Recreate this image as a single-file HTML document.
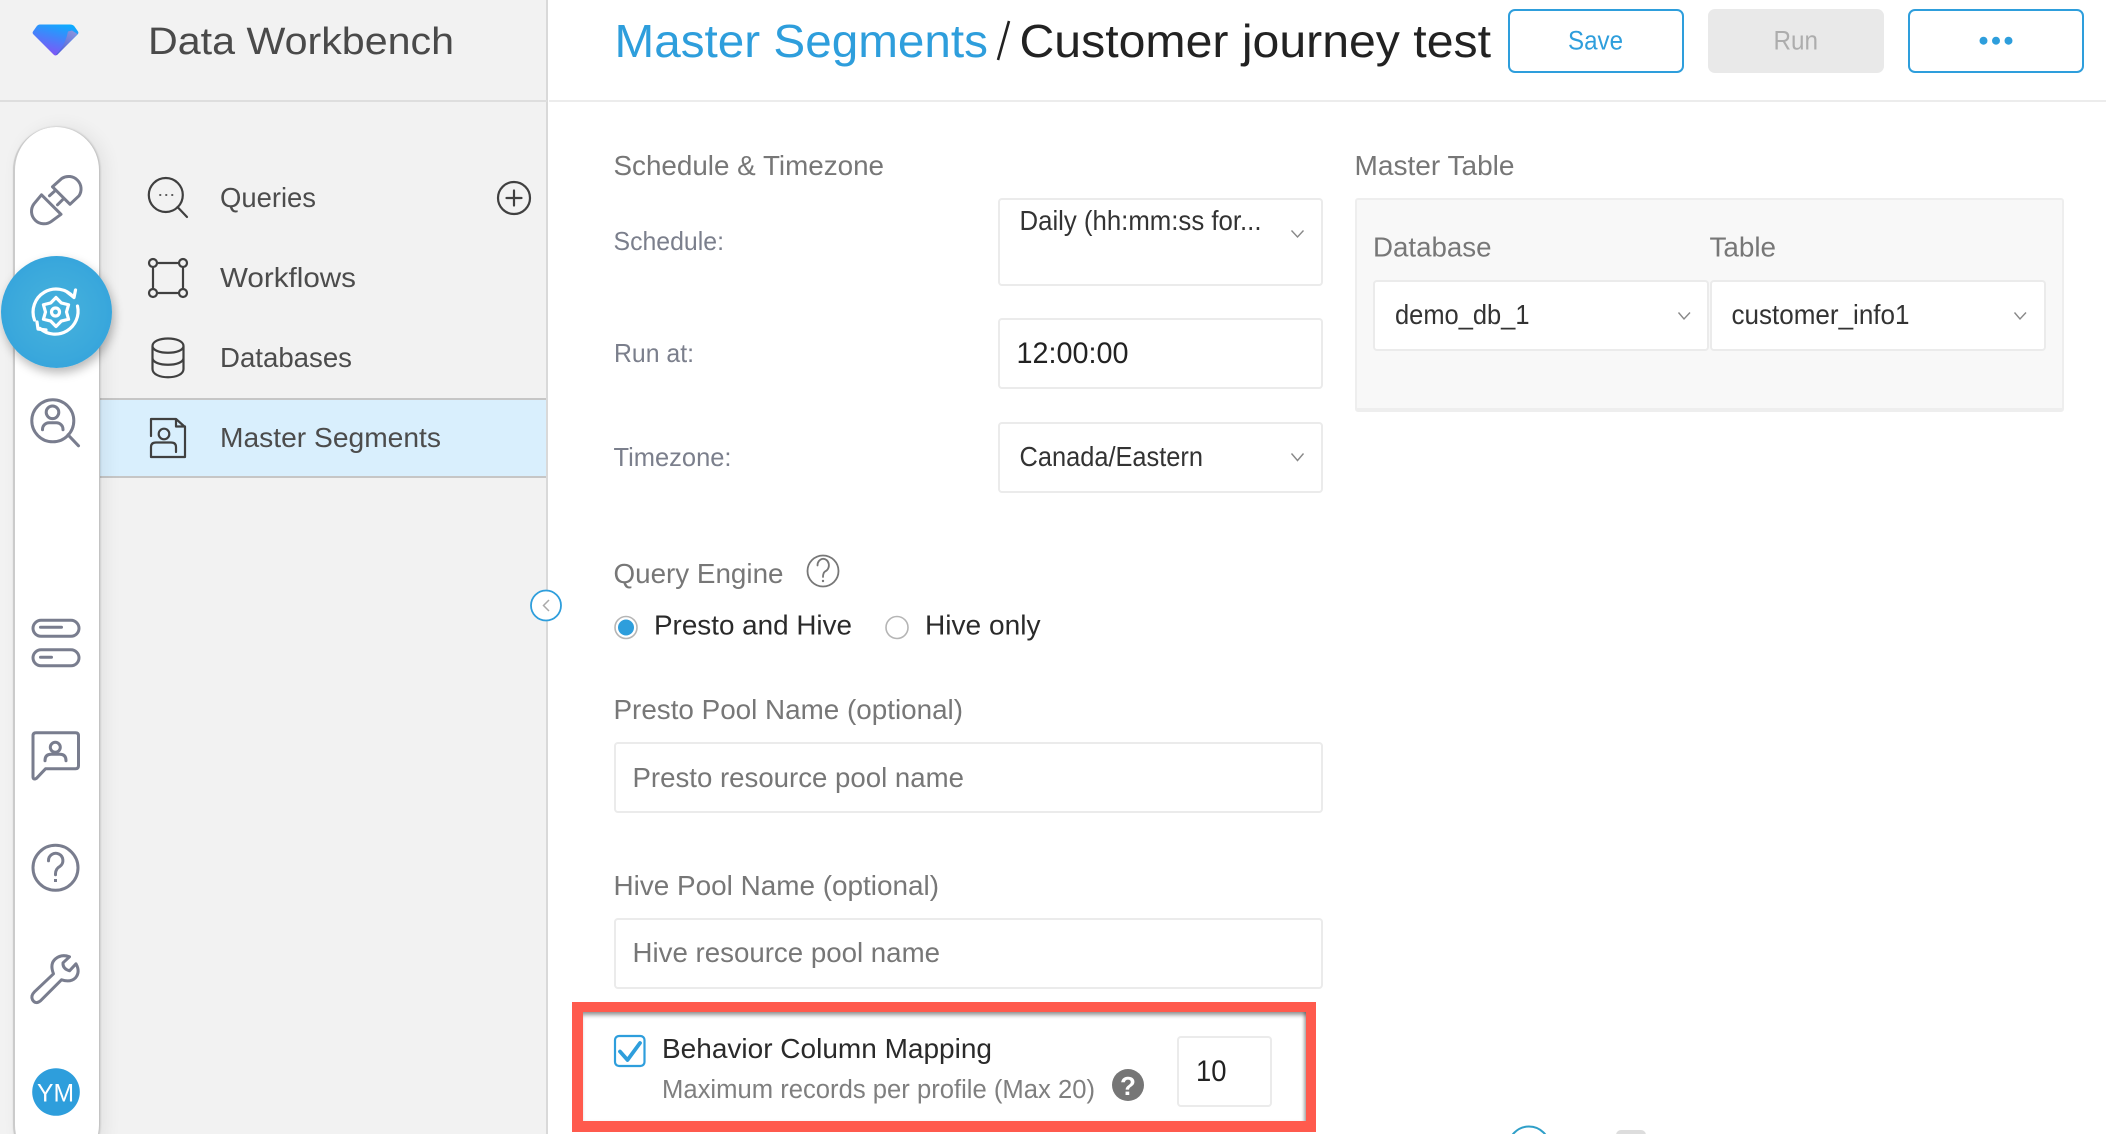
<!DOCTYPE html>
<html lang="en"><head><meta charset="utf-8"><title>Data Workbench</title>
<style>
html,body{margin:0;padding:0;background:#fff;width:2106px;height:1134px;overflow:hidden}
#p{position:relative;width:2106px;height:1134px;overflow:hidden;background:#fff}
.a{position:absolute;box-sizing:border-box}
svg{position:absolute;left:0;top:0;display:block}
text{font-family:"Liberation Sans",sans-serif}
.f{background:#fff;border:2px solid #ebebeb;border-radius:4px}
</style></head><body>
<div id="p">
<div class="a" style="left:0;top:0;width:548px;height:1134px;background:#f2f2f2;border-right:2px solid #d9d9d9"></div>
<div class="a" style="left:0;top:100px;width:547px;height:2px;background:#dedede"></div>
<div class="a" style="left:549px;top:100px;width:1557px;height:2px;background:#ececec"></div>
<div class="a" style="left:100px;top:398px;width:446px;height:80px;background:#d9effd;border-top:2px solid #c6c6c6;border-bottom:2px solid #c6c6c6"></div>
<div class="a" style="left:13px;top:127px;width:86px;height:1041px;background:#fff;border-radius:43px;border-left:2px solid #cbcbcb;box-shadow:1px 0 2px rgba(0,0,0,.22),6px 0 18px rgba(0,0,0,.07)"></div>
<div class="a" style="left:1px;top:256px;width:111px;height:112px;border-radius:50%;background:radial-gradient(circle,#47b2dc 0%,#3aa8dc 60%,#2e9edc 100%);box-shadow:2px 5px 10px rgba(0,0,0,.28)"></div>

<div class="a f" style="left:998px;top:198px;width:325px;height:88px"></div>
<div class="a f" style="left:998px;top:318px;width:325px;height:71px"></div>
<div class="a f" style="left:998px;top:422px;width:325px;height:71px"></div>
<div class="a" style="left:1355px;top:198px;width:709px;height:214px;background:#f8f8f8;border:2px solid #eee;border-bottom-width:4px;border-radius:3px"></div>
<div class="a f" style="left:1373px;top:280px;width:336px;height:71px"></div>
<div class="a f" style="left:1710px;top:280px;width:336px;height:71px"></div>
<div class="a f" style="left:614px;top:742px;width:709px;height:71px"></div>
<div class="a f" style="left:614px;top:918px;width:709px;height:71px"></div>
<div class="a" style="left:1508px;top:9px;width:176px;height:64px;border:2px solid #2e9edc;border-radius:7px"></div>
<div class="a" style="left:1708px;top:9px;width:176px;height:64px;background:#e9e9e9;border-radius:7px"></div>
<div class="a" style="left:1908px;top:9px;width:176px;height:64px;border:2px solid #2e9edc;border-radius:7px"></div>
<div class="a" style="left:572px;top:1002px;width:744px;height:130px;border:solid #ff5a4d;border-width:10px 10px 11px 11px;background:#fff;box-shadow:inset 0 5px 4px -2px rgba(0,0,0,.42),inset -4px 0 3px -2px rgba(0,0,0,.32)"></div>
<div class="a f" style="left:1177px;top:1036px;width:95px;height:71px"></div>
<div class="a" style="left:1616px;top:1130px;width:30px;height:12px;background:#ddd;border-radius:5px"></div>

<svg width="2106" height="1134" viewBox="0 0 2106 1134" fill="none" xmlns="http://www.w3.org/2000/svg">
<defs>
<linearGradient id="g" x1="0.75" y1="0" x2="0.35" y2="1"><stop offset="0" stop-color="#0cacff"/><stop offset="1" stop-color="#8552f5"/></linearGradient>
<linearGradient id="h" x1="0.8" y1="0" x2="0.2" y2="1"><stop offset="0" stop-color="#8a93de"/><stop offset="1" stop-color="#4c63d8"/></linearGradient>
</defs>
<!-- logo -->
<g transform="translate(-1 -0.500)">
<path d="M41 25H71Q74 25 75.500 27L79 32Q80 33.500 78.500 35L58.500 55Q56.500 57 54.500 55L34.500 35Q33 33.500 34 32L37.500 27Q39 25 41 25Z" fill="url(#g)"/>
<path d="M69 32L73 31L78.500 34.500L58 55.500L57 55Q63 49 66 42Q68 37 69 32Z" fill="url(#h)"/>
</g>

<g font-size="38" fill="#4a4a4a"><text x="148" y="54" textLength="306" lengthAdjust="spacingAndGlyphs">Data Workbench</text></g>
<g font-size="46"><text x="614.500" y="57" textLength="373.500" lengthAdjust="spacingAndGlyphs" fill="#2e9edc">Master Segments</text>
<text x="1019.500" y="57" textLength="471.500" lengthAdjust="spacingAndGlyphs" fill="#222">Customer journey test</text></g>
<path d="M1009 21L998 60" stroke="#222" stroke-width="2.600"/>

<!-- rail icons -->
<g transform="translate(-0.500 -1.200)" stroke="#797d8e" stroke-width="3" stroke-linecap="round" stroke-linejoin="round">
<path d="M53 188L62.500 179.500A12.500 12.500 0 0 1 79.500 197L70.500 205.500Z"/>
<path d="M42 196L61.500 215.500L52 222.500A12.500 12.500 0 0 1 34.500 205Z"/>
<path d="M50 197L55 192.500M58 206L63.500 200.500"/>
<circle cx="53.300" cy="422" r="21"/><circle cx="53" cy="413.500" r="6.300"/>
<path d="M43 431V430.500A6.500 6.500 0 0 1 49.500 424H57A6.500 6.500 0 0 1 63.500 430.500V431M68.500 436L79 447"/>
<rect x="33.500" y="621.500" width="46" height="16" rx="8"/><path d="M41 628.500H62"/>
<rect x="33.500" y="651" width="46" height="16" rx="8"/><path d="M41 658.500H52"/>
<path d="M36.500 734H76Q79 734 79 737V767Q79 770 76 770H46L37 779.500Q33.500 781.500 33.500 778V737Q33.500 734 36.500 734Z"/>
<circle cx="55.800" cy="748.500" r="5"/><path d="M45.500 762Q45.500 755.500 51.500 755.500H60.500Q66.500 755.500 66.500 762"/>
<circle cx="56" cy="869" r="22.500"/>
<path d="M49 862A7.200 7.200 0 1 1 60.500 867.500Q56 870 56 875V876"/>
<path d="M70 958L63.500 964Q63 970 70 972L76.500 965Q81 973 76 979Q71 984 62 981L41 1002Q36 1006 33 1001Q31 997 35 993L54 975Q50 965 56 960Q62 955 70 958Z"/>
</g>
<rect x="54" y="879" width="3" height="3" fill="#797d8e"/>
<circle cx="56" cy="1092" r="23.800" fill="#2e9edc"/>
<text x="37" y="1101.500" font-size="25" fill="#fff" textLength="37" lengthAdjust="spacingAndGlyphs">YM</text>

<!-- gear -->
<g stroke="#fff" stroke-width="3.200" stroke-linecap="round" stroke-linejoin="round">
<path d="M34.500 320A23 23 0 0 1 73.500 297"/><path d="M67 292L74 297.500L75.500 290"/>
<path d="M77.500 306A23 23 0 0 1 40 328.500"/><path d="M37 322L38 329L46 330"/>
<path d="M56 297.500L61.250 302.900L68.560 304.750L66.500 312L68.560 319.250L61.250 321.100L56 326.500L50.750 321.100L43.440 319.250L45.500 312L43.440 304.750L50.750 302.900Z"/>
<circle cx="55.500" cy="312" r="4"/>
</g>

<!-- nav icons -->
<g stroke="#404040" stroke-width="2.200" stroke-linecap="round" stroke-linejoin="round">
<circle cx="165.800" cy="195" r="17"/><path d="M177.500 207L187 217"/>
<path d="M160 195h.5M166 195h.5M172 195h.5" stroke-width="1.800"/>
<circle cx="153" cy="263" r="4"/><circle cx="183" cy="263" r="4"/><circle cx="153" cy="293" r="4"/><circle cx="183" cy="293" r="4"/>
<path d="M158.500 263H177.500M158.500 293H177.500M153 268.500V287.500M183 268.500V287.500"/>
<path d="M152.500 346C152.500 336 183.500 336 183.500 346C183.500 355 152.500 355 152.500 346ZM152.500 346V369C152.500 380 183.500 380 183.500 369V346M152.500 358C152.500 367 183.500 367 183.500 358"/>
<path d="M151 436V419H176L185 427V457H151V447Q151 442.500 156 442.500H171Q176 442.500 176 447V452M176 419V426.500H185"/>
<circle cx="164" cy="434" r="5.300"/>
<circle cx="514" cy="198" r="16"/><path d="M506.500 198H521.500M514 190.500V205.500"/>
</g>

<g font-size="27.500" fill="#4c4c4c">
<text x="220" y="207" textLength="96" lengthAdjust="spacingAndGlyphs">Queries</text>
<text x="220" y="287" textLength="136" lengthAdjust="spacingAndGlyphs">Workflows</text>
<text x="220" y="367" textLength="132" lengthAdjust="spacingAndGlyphs">Databases</text>
<text x="220" y="447" textLength="221" lengthAdjust="spacingAndGlyphs">Master Segments</text>
</g>

<!-- collapse -->
<circle cx="546" cy="605.500" r="15" fill="#fff" stroke="#2e9edc" stroke-width="1.800"/>
<path d="M549 600L543.500 605.500L549 611" stroke="#aaa" stroke-width="1.500"/>

<!-- header buttons -->
<g font-size="27">
<text x="1568" y="49.500" textLength="55" lengthAdjust="spacingAndGlyphs" fill="#2e9edc">Save</text>
<text x="1773.500" y="49.500" textLength="44.500" lengthAdjust="spacingAndGlyphs" fill="#adadad">Run</text>
</g>
<g fill="#2e9edc"><circle cx="1983.500" cy="40.700" r="4"/><circle cx="1996" cy="40.700" r="4"/><circle cx="2008.500" cy="40.700" r="4"/></g>

<!-- form labels -->
<g font-size="28" fill="#777">
<text x="613.500" y="175" textLength="270.500" lengthAdjust="spacingAndGlyphs">Schedule &amp; Timezone</text>
<text x="1354.500" y="175" textLength="160" lengthAdjust="spacingAndGlyphs">Master Table</text>
<text x="1373" y="256.500" textLength="118.500" lengthAdjust="spacingAndGlyphs">Database</text>
<text x="1709.500" y="256.500" textLength="66.500" lengthAdjust="spacingAndGlyphs">Table</text>
<text x="613.500" y="583" textLength="170" lengthAdjust="spacingAndGlyphs">Query Engine</text>
<text x="613.500" y="719" textLength="349.500" lengthAdjust="spacingAndGlyphs">Presto Pool Name (optional)</text>
<text x="613.500" y="895" textLength="325.500" lengthAdjust="spacingAndGlyphs">Hive Pool Name (optional)</text>
<text x="632.500" y="787" textLength="331.500" lengthAdjust="spacingAndGlyphs">Presto resource pool name</text>
<text x="632.500" y="962" textLength="307.500" lengthAdjust="spacingAndGlyphs">Hive resource pool name</text>
</g>
<g font-size="26" fill="#7b7f8c">
<text x="613.500" y="250" textLength="110.500" lengthAdjust="spacingAndGlyphs">Schedule:</text>
<text x="614" y="362" textLength="80" lengthAdjust="spacingAndGlyphs">Run at:</text>
<text x="613.500" y="466" textLength="118" lengthAdjust="spacingAndGlyphs">Timezone:</text>
</g>
<g font-size="27.500" fill="#333">
<text x="1019.500" y="230" textLength="242" lengthAdjust="spacingAndGlyphs">Daily (hh:mm:ss for...</text>
<text x="1019.500" y="466" textLength="183.500" lengthAdjust="spacingAndGlyphs">Canada/Eastern</text>
<text x="1395" y="324" textLength="134.500" lengthAdjust="spacingAndGlyphs">demo_db_1</text>
<text x="1731.500" y="324" textLength="178" lengthAdjust="spacingAndGlyphs">customer_info1</text>
</g>
<text x="1016.500" y="363" font-size="30" fill="#222" textLength="112" lengthAdjust="spacingAndGlyphs">12:00:00</text>
<g stroke="#888" stroke-width="1.400">
<path d="M1291.500 230.500L1297.500 237L1303.500 230.500"/>
<path d="M1291.500 453.500L1297.500 460.500L1303.500 453.500"/>
<path d="M1678.500 312.500L1684 319L1690 312.500"/>
<path d="M2014.500 312.500L2020 319L2026 312.500"/>
</g>

<!-- query engine -->
<circle cx="823" cy="571" r="15.500" stroke="#777" stroke-width="1.800"/>
<path d="M817.500 565.500A5.700 6.500 0 1 1 825 571.500Q823 573 823 577" stroke="#777" stroke-width="1.800" stroke-linecap="round"/>
<circle cx="823" cy="581" r="1.200" fill="#777"/>
<circle cx="626" cy="627.500" r="11" fill="#fff" stroke="#b5b5b5" stroke-width="1.600"/>
<circle cx="626" cy="627.500" r="8" fill="#2e9edc"/>
<circle cx="897" cy="627.500" r="11" fill="#fff" stroke="#b5b5b5" stroke-width="1.600"/>
<g font-size="27.500" fill="#2a2a2a">
<text x="654" y="634.500" textLength="198" lengthAdjust="spacingAndGlyphs">Presto and Hive</text>
<text x="925" y="634.500" textLength="115.500" lengthAdjust="spacingAndGlyphs">Hive only</text>
<text x="662" y="1058" textLength="330" lengthAdjust="spacingAndGlyphs">Behavior Column Mapping</text>
</g>

<!-- behaviour row -->
<rect x="615" y="1036" width="29.500" height="30" rx="4" fill="#fff" stroke="#2e9edc" stroke-width="2.200"/>
<path d="M620 1051.500L627.500 1060L640 1043" stroke="#2e9edc" stroke-width="3.800" stroke-linecap="round" stroke-linejoin="round"/>
<text x="662" y="1098" font-size="25.500" fill="#7f7f7f" textLength="433" lengthAdjust="spacingAndGlyphs">Maximum records per profile (Max 20)</text>
<circle cx="1128" cy="1085" r="16" fill="#767676"/>
<text x="1128" y="1095" font-size="26" font-weight="bold" fill="#fff" text-anchor="middle">?</text>
<text x="1196" y="1081" font-size="30" fill="#222" textLength="30.500" lengthAdjust="spacingAndGlyphs">10</text>

<!-- bottom partial arc -->
<circle cx="1529" cy="1147" r="20.500" stroke="#2f9fc8" stroke-width="2"/>
</svg>
</div>
</body></html>
